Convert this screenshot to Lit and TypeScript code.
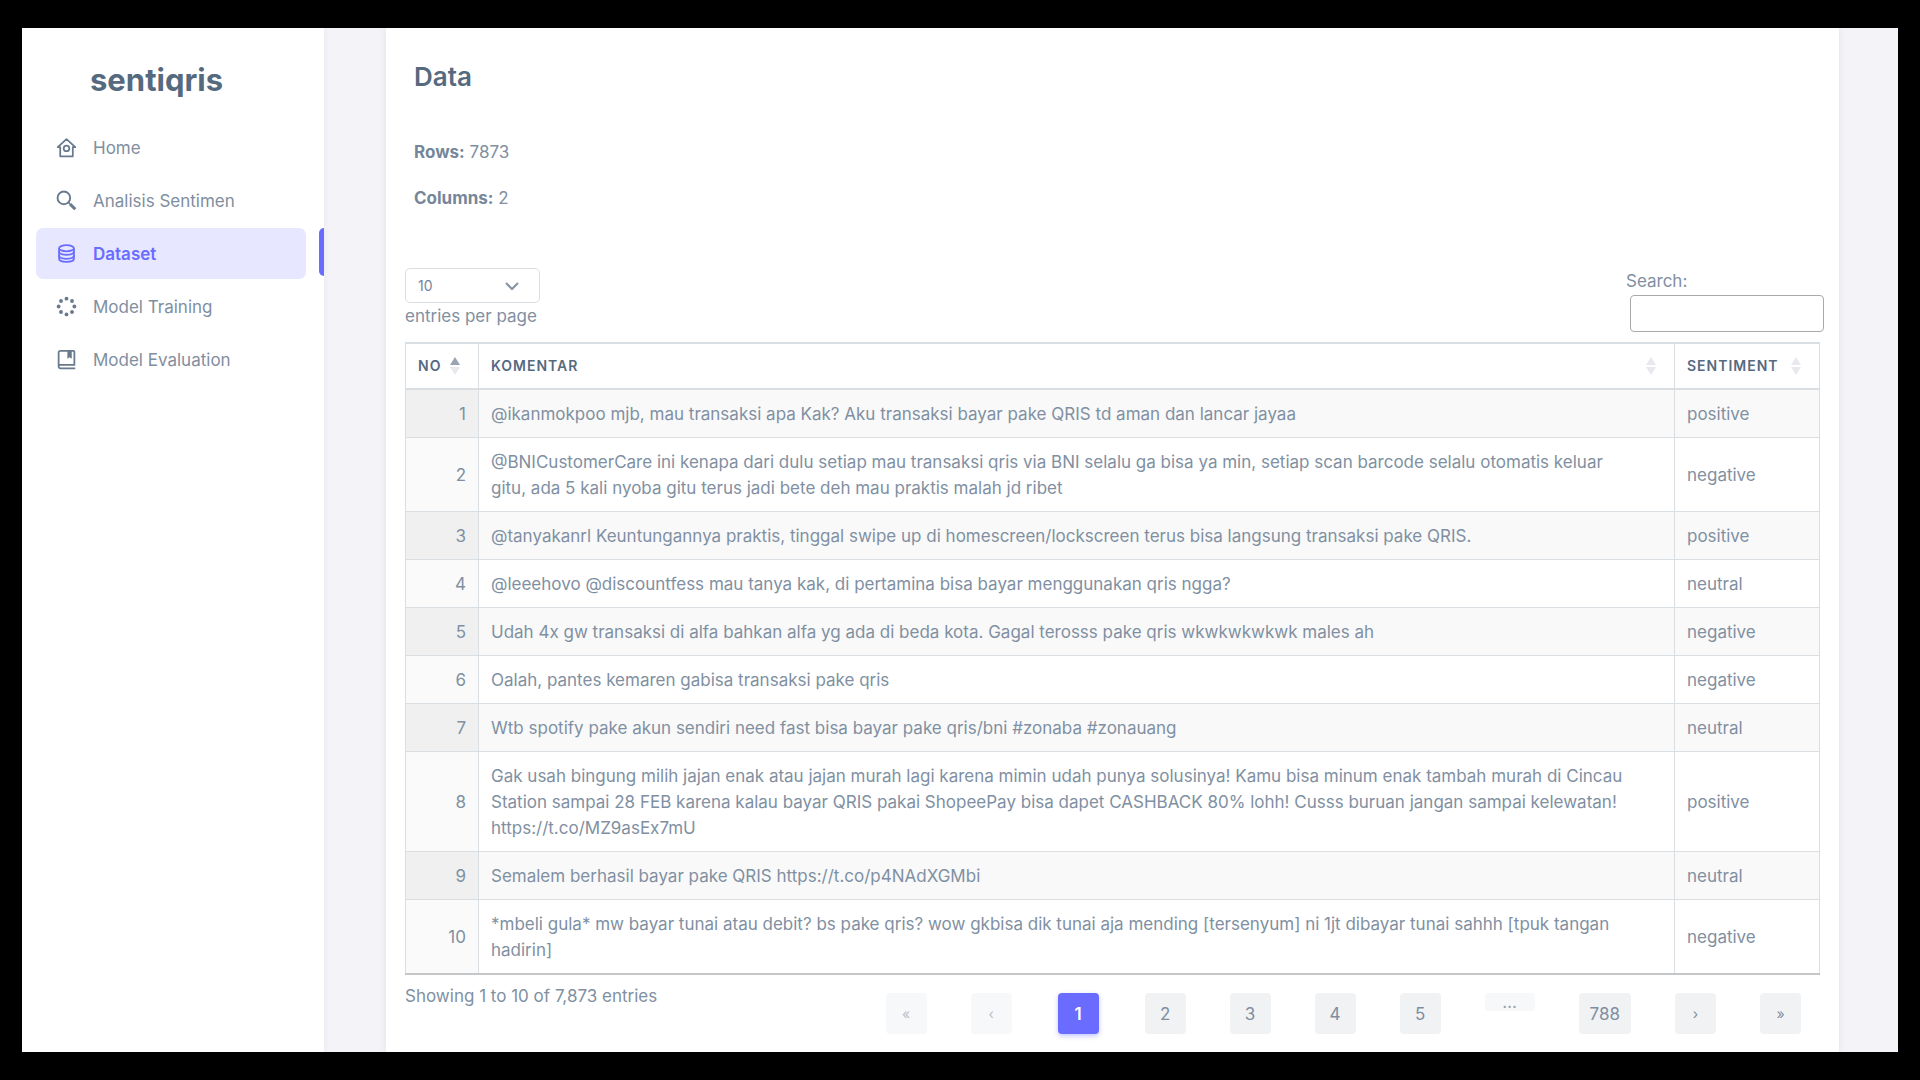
import { LitElement, html, css, svg } from "lit";
import { customElement } from "lit/decorators.js";

const NAV = [
  {
    label: "Home",
    icon: svg`<path d="M12 2.400 2 11.600h2.800V22h14.400V11.600H22z" fill="none" stroke="currentColor" stroke-width="2" stroke-linejoin="round"/><circle cx="12" cy="13" r="3.200" fill="none" stroke="currentColor" stroke-width="2"/>`,
  },
  {
    label: "Analisis Sentimen",
    icon: svg`<circle cx="9" cy="9" r="7.200" fill="none" stroke="currentColor" stroke-width="2.200"/><path d="m14 14 2 2" stroke="currentColor" stroke-width="2"/><path d="m16 16 6 6" stroke="currentColor" stroke-width="3.600"/>`,
  },
  {
    label: "Dataset",
    active: true,
    icon: svg`<g fill="none" stroke="currentColor" stroke-width="2"><ellipse cx="12" cy="6" rx="8.500" ry="3.500"/><path d="M3.500 6v12c0 2 3.800 3.500 8.500 3.500s8.500-1.500 8.500-3.500V6"/><path d="M3.500 9.500c0 2.500 3.800 4 8.500 4s8.500-1.500 8.500-4M3.500 14c0 2.500 3.800 4 8.500 4s8.500-1.500 8.500-4"/></g>`,
  },
  {
    label: "Model Training",
    icon: svg`<g fill="currentColor"><circle cx="12" cy="21" r="2.200"/><circle cx="12" cy="3" r="2.200"/><circle cx="5.700" cy="18.300" r="2.200"/><circle cx="18.300" cy="5.700" r="2.200"/><circle cx="3" cy="12" r="2.200"/><circle cx="21" cy="12" r="2.200"/><circle cx="5.700" cy="5.700" r="2.200"/><circle cx="18.300" cy="18.300" r="2.200"/></g>`,
  },
  {
    label: "Model Evaluation",
    icon: svg`<path fill="currentColor" d="M20 1H5C3.300 1 2 2.300 2 4v16c0 2 1.500 3 3 3h17v-2H5c-.6 0-1-.4-1-1s.4-1 1-1h17V3c0-1.100-.9-2-2-2zm0 16H4V4c0-.6.4-1 1-1h8v8l2.500-1.500L18 11V3h2z"/>`,
  },
];

const ROWS: [string, string][] = [
  ["@ikanmokpoo mjb, mau transaksi apa Kak? Aku transaksi bayar pake QRIS td aman dan lancar jayaa", "positive"],
  ["@BNICustomerCare ini kenapa dari dulu setiap mau transaksi qris via BNI selalu ga bisa ya min, setiap scan barcode selalu otomatis keluar gitu, ada 5 kali nyoba gitu terus jadi bete deh mau praktis malah jd ribet", "negative"],
  ["@tanyakanrl Keuntungannya praktis, tinggal swipe up di homescreen/lockscreen terus bisa langsung transaksi pake QRIS.", "positive"],
  ["@leeehovo @discountfess mau tanya kak, di pertamina bisa bayar menggunakan qris ngga?", "neutral"],
  ["Udah 4x gw transaksi di alfa bahkan alfa yg ada di beda kota. Gagal terosss pake qris wkwkwkwkwk males ah", "negative"],
  ["Oalah, pantes kemaren gabisa transaksi pake qris", "negative"],
  ["Wtb spotify pake akun sendiri need fast bisa bayar pake qris/bni #zonaba #zonauang", "neutral"],
  ["Gak usah bingung milih jajan enak atau jajan murah lagi karena mimin udah punya solusinya! Kamu bisa minum enak tambah murah di Cincau Station sampai 28 FEB karena kalau bayar QRIS pakai ShopeePay bisa dapet CASHBACK 80% lohh! Cusss buruan jangan sampai kelewatan! https://t.co/MZ9asEx7mU", "positive"],
  ["Semalem berhasil bayar pake QRIS https://t.co/p4NAdXGMbi", "neutral"],
  ["*mbeli gula* mw bayar tunai atau debit? bs pake qris? wow gkbisa dik tunai aja mending [tersenyum] ni 1jt dibayar tunai sahhh [tpuk tangan hadirin]", "negative"],
];

const PAGES = [
  { label: "«", kind: "glyph disabled" },
  { label: "‹", kind: "glyph disabled" },
  { label: "1", kind: "current" },
  { label: "2", kind: "" },
  { label: "3", kind: "" },
  { label: "4", kind: "" },
  { label: "5", kind: "" },
  { label: "…", kind: "ellipsis disabled" },
  { label: "788", kind: "" },
  { label: "›", kind: "glyph" },
  { label: "»", kind: "glyph" },
];

const sortIcon = (asc = false) => html`<svg class="sort ${asc ? "asc" : ""}" viewBox="0 0 10 20" aria-hidden="true">
  <path class="up" d="M5 1l5 8H0z" /><path class="down" d="M5 19l5-8H0z" />
</svg>`;

@customElement("app-root")
export class AppRoot extends LitElement {
  static styles = css`
    :host {
      display: block;
      box-sizing: border-box;
      height: 100vh;
      padding: 28px 22px;
      background: #000;
      color: #8090a2;
      font: 17px/26px Inter, "Liberation Sans", sans-serif;
    }
    * {
      box-sizing: border-box;
    }
    .shell {
      display: flex;
      height: 100%;
      overflow: hidden;
      background: #f4f3f8;
    }
    .sidebar {
      flex: 0 0 302px;
      padding: 30px 0 0 14px;
      background: #fff;
      box-shadow: 0 0 6px rgba(161, 172, 184, 0.15);
    }
    .brand {
      display: block;
      padding-left: 54px;
      margin-bottom: 20px;
      color: #566a7f;
      font-size: 31px;
      line-height: 44px;
      font-weight: 700;
      text-decoration: none;
    }
    .menu {
      list-style: none;
      margin: 0;
      padding: 0;
      display: grid;
      gap: 2px;
    }
    .item {
      display: flex;
      justify-content: space-between;
    }
    .link {
      display: flex;
      align-items: center;
      gap: 16px;
      width: 270px;
      height: 51px;
      padding: 0 20px;
      border-radius: 7px;
      color: #7f8ea0;
      text-decoration: none;
    }
    .icon {
      width: 21px;
      height: 21px;
      color: #697a8d;
    }
    .active .link,
    .active .icon {
      color: #696cff;
    }
    .active .link {
      background: #e7e7ff;
      font-weight: 600;
    }
    .active::after {
      content: "";
      width: 5px;
      height: 48px;
      border-radius: 5px 0 0 5px;
      background: #696cff;
    }
    .main {
      flex: 1;
      min-width: 0;
      padding: 0 59px 0 62px;
    }
    .card {
      min-height: 100%;
      padding: 34px 19px 0;
      background: #fff;
      box-shadow: 0 0 6px rgba(67, 89, 113, 0.12);
    }
    .intro {
      padding: 0 9px;
    }
    .title {
      margin: 0 0 47px;
      color: #566a7f;
      font-size: 26px;
      line-height: 30px;
      font-weight: 600;
    }
    .fact {
      margin: 0 0 20px;
    }
    .fact strong {
      color: #76869a;
    }
    .tools {
      display: flex;
      justify-content: space-between;
      margin-top: 57px;
      padding-bottom: 10px;
    }
    .length {
      display: grid;
      justify-items: start;
      align-content: start;
    }
    .select {
      appearance: none;
      width: 135px;
      height: 35px;
      padding: 0 12px;
      border: 1px solid #d9dee3;
      border-radius: 5px;
      color: #76869a;
      font: 14px Inter, "Liberation Sans", sans-serif;
      background: #fff;
    }
    .selectbox {
      display: grid;
      align-items: center;
    }
    .selectbox > * {
      grid-area: 1 / 1;
    }
    .chevron {
      justify-self: end;
      width: 14px;
      height: 14px;
      margin-right: 21px;
      pointer-events: none;
    }
    .search {
      display: grid;
      gap: 1px;
      width: 198px;
      margin-right: -4px;
    }
    .input {
      justify-self: end;
      width: 194px;
      height: 37px;
      padding: 6px;
      border: 1px solid #aaa;
      border-radius: 4px;
      background: transparent;
      font: inherit;
      color: inherit;
    }
    .table {
      width: 100%;
      border-collapse: collapse;
      border-bottom: 2px solid #c4c6c8;
    }
    .table th,
    .table td {
      border: 1px solid #d9dee3;
      padding: 11px 12px 10px;
      text-align: left;
    }
    .table th {
      border-top: 2px solid #d9dee3;
      border-bottom: 2px solid #d9dee3;
      padding: 9px 12px;
      color: #566a7f;
      font-size: 14px;
      font-weight: 600;
      letter-spacing: 1px;
      text-transform: uppercase;
    }
    .head {
      display: flex;
      justify-content: space-between;
      align-items: center;
    }
    .sort {
      width: 10px;
      height: 20px;
      margin-right: 6px;
      fill: #e7e9ed;
    }
    .asc .up {
      fill: #98a4b1;
    }
    .table .no {
      width: 73px;
      text-align: right;
    }
    .table .comment {
      padding-right: 32px;
    }
    .sentiment {
      width: 145px;
    }
    .table tbody tr:nth-child(odd) {
      background: #f9f9f9;
    }
    .table td.no {
      background: #fafafa;
    }
    .table tr:nth-child(odd) td.no {
      background: #f0f0f0;
    }
    .footer {
      display: flex;
      justify-content: space-between;
      padding-top: 8px;
    }
    .pages {
      display: flex;
      align-items: flex-start;
      gap: 44px;
      padding: 10px 19px 0 0;
    }
    .page {
      min-width: 41px;
      height: 41px;
      padding: 0 11px;
      border: 0;
      border-radius: 4px;
      background: #f0f2f4;
      color: #7f8ea0;
      font: inherit;
    }
    .glyph {
      font-size: 14px;
    }
    .disabled {
      background: #f7f8f9;
      color: #b8c0ca;
    }
    .current {
      margin: 0 2px;
      background: #696cff;
      color: #fff;
      font-weight: 600;
      box-shadow: 0 2px 5px rgba(105, 108, 255, 0.4);
    }
    .ellipsis {
      width: 50px;
      height: 18px;
      line-height: 18px;
      border-radius: 4px;
      color: #97a2b0;
      text-align: center;
    }
  `;

  render() {
    return html`
      <div class="shell">
        <aside class="sidebar">
          <a class="brand" href="#">sentiqris</a>
          <nav>
            <ul class="menu">
              ${NAV.map(
                (n) => html`<li class="item ${n.active ? "active" : ""}">
                  <a class="link" href="#"><svg class="icon" viewBox="0 0 24 24" aria-hidden="true">${n.icon}</svg>${n.label}</a>
                </li>`
              )}
            </ul>
          </nav>
        </aside>
        <main class="main">
          <section class="card">
            <div class="intro">
              <h1 class="title">Data</h1>
              <p class="fact"><strong>Rows:</strong> 7873</p>
              <p class="fact"><strong>Columns:</strong> 2</p>
            </div>
            <div class="tools">
              <div class="length">
                <div class="selectbox">
                  <select class="select" id="length"><option>10</option><option>25</option><option>50</option></select>
                  <svg class="chevron" viewBox="0 0 14 14" fill="none" stroke="#8592a3" stroke-width="2" aria-hidden="true"><path d="m1 4 6 6 6-6" /></svg>
                </div>
                <label for="length">entries per page</label>
              </div>
              <div class="search">
                <label for="search">Search:</label>
                <input class="input" id="search" type="search" />
              </div>
            </div>
            <table class="table">
              <thead>
                <tr>
                  <th class="no"><div class="head">No ${sortIcon(true)}</div></th>
                  <th><div class="head">Komentar ${sortIcon()}</div></th>
                  <th class="sentiment"><div class="head">Sentiment ${sortIcon()}</div></th>
                </tr>
              </thead>
              <tbody>
                ${ROWS.map(
                  ([text, mood], i) => html`<tr><td class="no">${i + 1}</td><td class="comment">${text}</td><td>${mood}</td></tr>`
                )}
              </tbody>
            </table>
            <div class="footer">
              <div>Showing 1 to 10 of 7,873 entries</div>
              <nav class="pages">
                ${PAGES.map((p) =>
                  p.label === "…"
                    ? html`<span class=${p.kind}>${p.label}</span>`
                    : html`<button class="page ${p.kind}" type="button">${p.label}</button>`
                )}
              </nav>
            </div>
          </section>
        </main>
      </div>
    `;
  }
}
